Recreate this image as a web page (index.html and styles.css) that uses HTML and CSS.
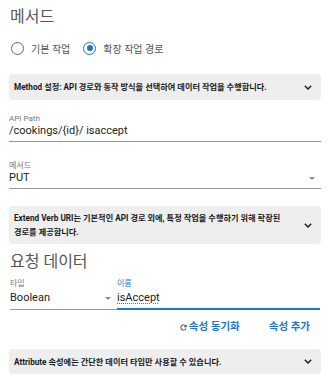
FILE: index.html
```html
<!DOCTYPE html>
<html lang="ko">
<head>
<meta charset="utf-8">
<link rel="stylesheet" href="styles.css">
</head>
<body>
<div class="page">
  <h2 class="title">메서드</h2>
  <div class="radios">
    <label class="radio"><span class="circle"></span>기본 작업</label>
    <label class="radio on"><span class="circle"></span>확장 작업 경로</label>
  </div>
  <div class="panel p1">
    <span class="ptext">Method 설정: API 경로와 동작 방식을 선택하여 데이터 작업을 수행합니다.</span>
    <svg class="chev" width="8" height="5" viewBox="0 0 8 5"><path d="M0.8 0.8 L4 4 L7.2 0.8" fill="none" stroke="#222" stroke-width="1.5"/></svg>
  </div>
  <div class="field f-path">
    <div class="flabel">API Path</div>
    <div class="fvalue">/cookings/{id}/ isaccept</div>
  </div>
  <div class="field f-method">
    <div class="flabel">메서드</div>
    <div class="fvalue">PUT<span class="tri"></span></div>
  </div>
  <div class="panel p2">
    <span class="ptext">Extend Verb URI는 기본적인 API 경로 외에, 특정 작업을 수행하기 위해 확장된 경로를 제공합니다.</span>
    <svg class="chev" width="8" height="5" viewBox="0 0 8 5"><path d="M0.8 0.8 L4 4 L7.2 0.8" fill="none" stroke="#222" stroke-width="1.5"/></svg>
  </div>
  <h2 class="title t2">요청 데이터</h2>
  <div class="row">
    <div class="field f-type">
      <div class="flabel">타입</div>
      <div class="fvalue">Boolean<span class="tri"></span></div>
    </div>
    <div class="field f-name">
      <div class="flabel">이름</div>
      <div class="fvalue"><span class="spell">isAccept</span></div>
    </div>
  </div>
  <div class="btns">
    <span class="btn"><svg class="ref" width="9" height="9" viewBox="0 0 24 24"><path d="M17.65 6.35A7.96 7.96 0 0 0 12 4a8 8 0 1 0 7.730 10h-2.08A6 6 0 1 1 12 6c1.66 0 3.14.69 4.22 1.78L13 11h7V4l-2.35 2.35z" fill="#333"/></svg>속성 동기화</span>
    <span class="btn">속성 추가</span>
  </div>
  <div class="panel p3">
    <span class="ptext">Attribute 속성에는 간단한 데이터 타입만 사용할 수 있습니다.</span>
    <svg class="chev" width="8" height="5" viewBox="0 0 8 5"><path d="M0.8 0.8 L4 4 L7.2 0.8" fill="none" stroke="#222" stroke-width="1.5"/></svg>
  </div>
</div>
</body>
</html>
```
FILE: styles.css
```css
* { box-sizing: border-box; }
html, body { margin: 0; padding: 0; background: #fff; }
body {
  font-family: Roboto, "Noto Sans CJK KR", sans-serif;
  color: #222;
  width: 330px;
  overflow: hidden;
}
.page { padding: 0 9px; }
.title {
  margin: 0;
  padding: 6px 0 0 1px;
  font-size: 16px;
  font-weight: 400;
  line-height: 22px;
  height: 34px;
  color: #555;
}
.radios {
  display: flex;
  align-items: center;
  height: 24px;
  margin-top: 2px;
  padding-left: 2px;
}
.radio {
  display: flex;
  align-items: center;
  gap: 7px;
  font-size: 10px;
  color: #555;
  margin-right: 13px;
}
.circle {
  width: 13px;
  height: 13px;
  border: 1.4px solid #666;
  border-radius: 50%;
  display: inline-flex;
  align-items: center;
  justify-content: center;
}
.radio.on .circle { border-color: #1976d2; }
.radio.on .circle::after {
  content: "";
  width: 6px;
  height: 6px;
  border-radius: 50%;
  background: #1976d2;
}
.panel {
  background: #eee;
  border-radius: 4px;
  display: flex;
  align-items: center;
  justify-content: space-between;
  padding: 0 9px 0 5px;
}
.ptext {
  font-size: 8.2px;
  font-weight: 700;
  line-height: 14px;
  color: #1a1a1a;
  word-break: keep-all;
}
.chev { flex: none; margin-left: 8px; }
.p1 { margin-top: 14px; height: 26px; }
.p2 { margin-top: 17px; height: 38px; }
.p2 .ptext { width: 280px; }
.p3 { margin-top: 15px; height: 25px; }
.field { border-bottom: 1px solid #999; }
.flabel {
  font-size: 8px;
  line-height: 11px;
  color: #777;
}
.fvalue {
  position: relative;
  font-size: 11px;
  line-height: 14px;
  color: #222;
  padding: 0 0 3px 0;
}
.f-path { margin-top: 13px; }
.f-method { margin-top: 18px; }
.tri {
  position: absolute;
  right: 6px;
  top: 6px;
  width: 0;
  height: 0;
  border-left: 3px solid transparent;
  border-right: 3px solid transparent;
  border-top: 3px solid #888;
}
.t2 { padding-top: 7px; height: 29px; }
.row { display: flex; margin-top: 5px; padding-left: 1px; }
.row .fvalue { padding: 2px 0 4px 0; }
.f-type { width: 107px; }
.f-type .tri { right: 6px; top: 8px; }
.f-name { flex: 1; border-bottom: 2px solid #1976d2; margin-right: 1px; }
.f-name .fvalue { padding-bottom: 3px; }
.f-name .flabel { color: #1976d2; }
.spell { text-decoration: underline dotted #e53935; text-underline-offset: 2px; }
.btns {
  display: flex;
  justify-content: flex-end;
  gap: 29px;
  margin-top: 10px;
  padding-right: 11px;
}
.btn {
  display: inline-flex;
  align-items: center;
  font-size: 10.5px;
  font-weight: 700;
  color: #1976d2;
  line-height: 14px;
}
.ref { margin-right: 1px; }
```
